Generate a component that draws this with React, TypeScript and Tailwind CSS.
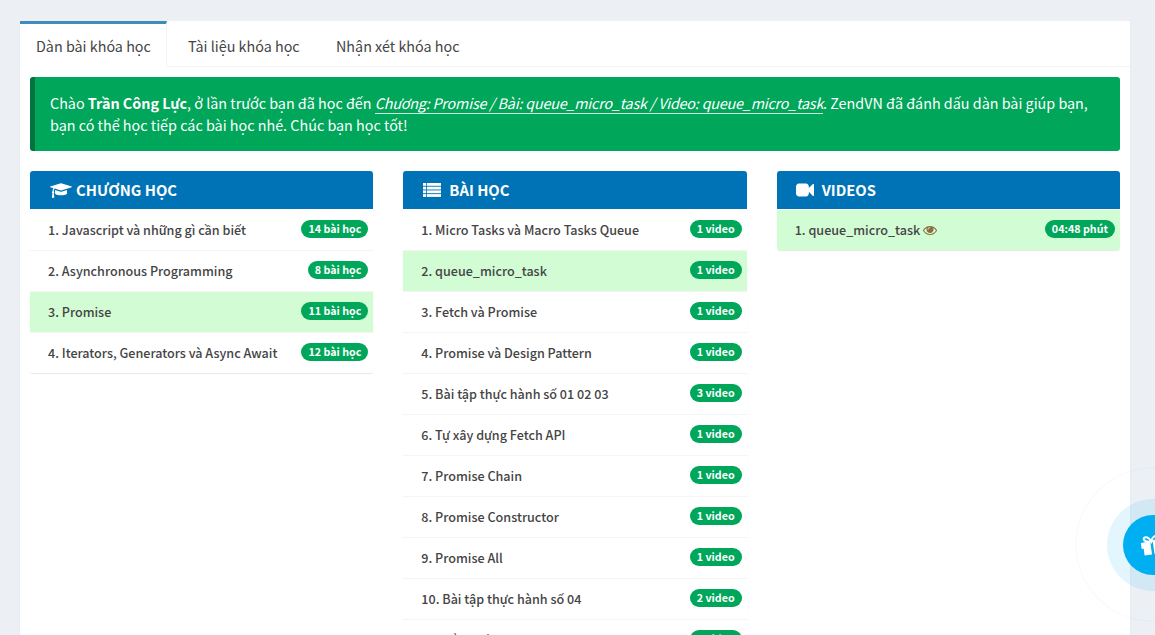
import React from "react";

type Row = { text: string; badge: string; active?: boolean; seen?: boolean };

const chapters: Row[] = [
  { text: "1. Javascript và những gì cần biết", badge: "14 bài học" },
  { text: "2. Asynchronous Programming", badge: "8 bài học" },
  { text: "3. Promise", badge: "11 bài học", active: true },
  { text: "4. Iterators, Generators và Async Await", badge: "12 bài học" },
];

const lessons: Row[] = [
  { text: "1. Micro Tasks và Macro Tasks Queue", badge: "1 video" },
  { text: "2. queue_micro_task", badge: "1 video", active: true },
  { text: "3. Fetch và Promise", badge: "1 video" },
  { text: "4. Promise và Design Pattern", badge: "1 video" },
  { text: "5. Bài tập thực hành số 01 02 03", badge: "3 video" },
  { text: "6. Tự xây dựng Fetch API", badge: "1 video" },
  { text: "7. Promise Chain", badge: "1 video" },
  { text: "8. Promise Constructor", badge: "1 video" },
  { text: "9. Promise All", badge: "1 video" },
  { text: "10. Bài tập thực hành số 04", badge: "2 video" },
  { text: "11. Tổng kết", badge: "1 video" },
];

const videos: Row[] = [{ text: "1. queue_micro_task", badge: "04:48 phút", active: true, seen: true }];

function CapIcon() {
  return (
    <svg viewBox="0 0 2304 1792" className="h-[17px] w-[22px]" fill="currentColor">
      <path d="M1774 836l18 316q4 69-82 128t-235 93.5-323 34.5-323-34.5-235-93.5-82-128l18-316 574 181q22 7 48 7t48-7zm530-324q0 23-22 31l-1120 352q-4 1-10 1t-10-1l-652-206q-43 34-71 111.5t-34 178.5q63 36 63 109 0 69-58 107l58 433q2 14-8 25-9 11-24 11h-192q-15 0-24-11-10-11-8-25l58-433q-58-38-58-107 0-73 65-111 11-207 98-330l-333-104q-22-8-22-31t22-31l1120-352q4-1 10-1t10 1l1120 352q22 8 22 31z" />
    </svg>
  );
}

function ListIcon() {
  return (
    <svg viewBox="0 0 18 14" className="h-3.5 w-[18px]" fill="currentColor">
      {[0, 3.7, 7.4, 11.1].map((y) => (
        <g key={y}>
          <rect x="0" y={y} width="3.2" height="2.8" />
          <rect x="4" y={y} width="14" height="2.8" />
        </g>
      ))}
    </svg>
  );
}

function CameraIcon() {
  return (
    <svg viewBox="0 0 1792 1792" className="size-[18px]" fill="currentColor">
      <path d="M1792 352v1088q0 42-39 59-13 5-25 5-27 0-45-19l-403-403v166q0 119-84.5 203.5t-203.5 84.5h-704q-119 0-203.5-84.5t-84.5-203.5v-704q0-119 84.5-203.5t203.5-84.5h704q119 0 203.5 84.5t84.5 203.5v165l403-402q18-19 45-19 12 0 25 5 39 17 39 59z" />
    </svg>
  );
}

function EyeIcon() {
  return (
    <svg viewBox="0 0 1792 1792" className="ml-[3px] size-3.5 text-[#8a6d3b]" fill="currentColor">
      <path d="M1664 960q-152-236-381-353 61 104 61 225 0 185-131.5 316.5t-316.5 131.5-316.5-131.5-131.5-316.5q0-121 61-225-229 117-381 353 133 205 333.5 326.5t434.5 121.5 434.5-121.5 333.5-326.5zm-720-384q0-20-14-34t-34-14q-125 0-214.5 89.5t-89.5 214.5q0 20 14 34t34 14 34-14 14-34q0-86 61-147t147-61q20 0 34-14t14-34zm848 384q0 34-20 69-140 230-376.5 368.5t-499.5 138.5-499.5-139-376.5-368q-20-35-20-69t20-69q140-229 376.5-368t499.5-139 499.5 139 376.5 368q20 35 20 69z" />
    </svg>
  );
}

function Panel({ title, icon, rows }: { title: string; icon: React.ReactNode; rows: Row[] }) {
  return (
    <section className="min-w-0 flex-1 overflow-hidden rounded-[3px] shadow-[0_1px_1px_rgba(0,0,0,0.1)]">
      <h3 className="flex h-[38px] items-center bg-[#0073b7] pl-[19px] text-[14.8px] font-bold text-white">
        {icon}
        <span>{title}</span>
      </h3>
      <ul className="pt-px">
        {rows.map((r) => (
          <li
            key={r.text}
            className={`flex h-[41px] items-center justify-between border-b border-[#f4f4f4] pr-[5px] pl-[18px] text-[12.58px] font-medium text-[#444] last:h-10 last:border-b-0 ${r.active ? "bg-[#d2fcd4]" : "bg-white"}`}
          >
            <span className="flex items-center whitespace-nowrap">
              {r.text}
              {r.seen && <EyeIcon />}
            </span>
            <span className="mb-0.5 flex h-[18px] items-center rounded-full bg-[#00a65a] px-[7px] text-[10.7px] font-bold whitespace-nowrap text-white">
              {r.badge}
            </span>
          </li>
        ))}
      </ul>
    </section>
  );
}

function GiftButton() {
  return (
    <div className="absolute top-[467px] left-[1075px] h-[156px] w-[80px] overflow-hidden">
      <svg viewBox="0 0 80 156" className="h-[156px] w-[80px]">
        <circle cx="77.5" cy="77.5" r="76.5" fill="none" stroke="#00aff2" strokeOpacity=".045" strokeWidth="1.5" />
        <circle cx="78" cy="78" r="46" fill="#00aff2" fillOpacity=".11" />
        <circle cx="78" cy="78" r="30" fill="#00aff2" />
        <g transform="translate(65 70) rotate(-8)" fill="#fff">
          <path d="M0 6h9.5v6H0zM12 6h10v6H12zM2 11h7.5v8H2zM12 11h8v8h-8zM2 11h5v8H2z" />
          <path d="M9.5 6C2 6 2.500 0.500 5.500 1c3 0 5 5 5 5s2-5 5-5c3-.5 3.500 5-4 5" fill="none" stroke="#fff" strokeWidth="2" />
        </g>
      </svg>
    </div>
  );
}

export default function App() {
  return (
    <div className="relative h-[635px] w-[1155px] overflow-hidden bg-[#ecf0f5] px-5 pt-[21px] font-['Noto_Sans_CJK_SC',sans-serif] text-[#444]">
      <main className="w-[1110px] bg-white shadow-[0_1px_1px_rgba(0,0,0,0.1)]">
        <nav className="flex h-[46px] text-[14.35px]">
          <div className="w-[147px] border-t-[3px] border-r border-t-[#3c8dbc] border-r-[#f4f4f4] pt-[11px] pl-4 leading-[22px] whitespace-nowrap">
            Dàn bài khóa học
          </div>
          <div className="flex flex-1 border-b border-[#f4f4f4] pt-[14px] leading-[22px] whitespace-nowrap">
            <div className="w-[148px] pl-[21px]">Tài liệu khóa học</div>
            <div className="pl-[21px]">Nhận xét khóa học</div>
          </div>
        </nav>
        <div className="p-2.5">
          <div className="mb-5 h-[74px] rounded-[3px] border-l-[5px] border-[#00733e] bg-[#00a65a] pt-[15px] pl-[15px] text-[14.35px] leading-[22px] whitespace-nowrap text-white">
            <p>
              Chào <b>Trần Công Lực</b>, ở lần trước bạn đã học đến{" "}
              <i className="border-b border-white/80 tracking-[-0.2px]">
                Chương: Promise / Bài: queue_micro_task / Video: queue_micro_task
              </i>
              . ZendVN đã đánh dấu dàn bài giúp bạn,
            </p>
            <p>bạn có thể học tiếp các bài học nhé. Chúc bạn học tốt!</p>
          </div>
          <div className="flex items-start gap-[30px]">
            <Panel title="CHƯƠNG HỌC" rows={chapters} icon={<span className="mr-1 ml-px"><CapIcon /></span>} />
            <Panel title="BÀI HỌC" rows={lessons} icon={<span className="mr-2 ml-px"><ListIcon /></span>} />
            <Panel title="VIDEOS" rows={videos} icon={<span className="mr-2"><CameraIcon /></span>} />
          </div>
        </div>
      </main>
      <GiftButton />
    </div>
  );
}
